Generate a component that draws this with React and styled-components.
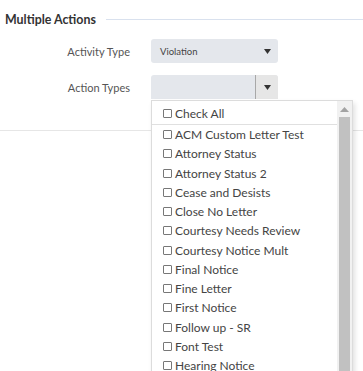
import React from "react";
import styled, { createGlobalStyle } from "styled-components";

const Global = createGlobalStyle`
  html, body { margin: 0; padding: 0; background: #fff; }
  body { font-family: "Lato", "Noto Sans", sans-serif; color: #444; }
`;

const Page = styled.div`
  height: 100vh;
  overflow: hidden;
`;

const Section = styled.div`
  border-bottom: 1px solid #e6e6e6;
  height: 131px;
  box-sizing: border-box;
  padding-top: 10px;
`;

const Header = styled.div`
  display: flex;
  align-items: center;
  gap: 10px;
  padding-left: 5px;
  height: 18px;
`;

const Title = styled.div`
  font-weight: 700;
  font-size: 12.4px;
  color: #333;
  white-space: nowrap;
`;

const Rule = styled.div`
  flex: 1;
  height: 1px;
  background: #d9e1ee;
`;

const Form = styled.div`
  display: flex;
  flex-direction: column;
  gap: 12px;
  margin-top: 11px;
`;

const Row = styled.div`
  display: grid;
  grid-template-columns: 130px 127px;
  column-gap: 21px;
  align-items: center;
  position: relative;
`;

const Label = styled.div`
  text-align: right;
  font-size: 11px;
  color: #555;
`;

const SelectBox = styled.div`
  height: 24px;
  background: #e4e7ec;
  border-radius: ${(p) => (p.$open ? "3px 3px 0 0" : "3px")};
  display: flex;
  align-items: center;
  font-size: 9.5px;
  color: #444;
  overflow: hidden;
`;

const SelectText = styled.div`
  flex: 1;
  padding-left: 9px;
`;

const ArrowCell = styled.div`
  width: 22px;
  align-self: stretch;
  display: flex;
  align-items: center;
  justify-content: center;
  background: ${(p) => (p.$split ? "#e6e6e6" : "transparent")};
  border-left: ${(p) => (p.$split ? "1px solid #a8a8a8" : "none")};
`;

const Arrow = () => (
  <svg width="7" height="5" viewBox="0 0 7 5">
    <path d="M0 0h7L3.5 5z" fill="#333" />
  </svg>
);

const Dropdown = styled.div`
  position: absolute;
  left: 151px;
  top: 25px;
  width: 202px;
  height: 300px;
  background: #fff;
  border: 1px solid #dcdcdc;
  box-sizing: border-box;
  box-shadow: 2px 3px 5px rgba(0, 0, 0, 0.12);
  display: flex;
  z-index: 5;
`;

const List = styled.div`
  flex: 1;
  display: flex;
  flex-direction: column;
`;

const CheckAll = styled.div`
  height: 22px;
  flex: none;
  border-bottom: 1px solid #e0e0e0;
  display: flex;
  align-items: center;
  padding-left: 11px;
  margin-top: 1px;
`;

const Item = styled.div`
  height: 19.25px;
  flex: none;
  display: flex;
  align-items: center;
  padding-left: 11px;
  font-size: 12px;
  color: #444;
  white-space: nowrap;
`;

const ItemText = styled.span`
  font-size: 12px;
  color: #444;
`;

const Box = styled.span`
  width: 7px;
  height: 7px;
  border: 1px solid #777;
  border-radius: 1px;
  margin-right: 3px;
  flex: none;
`;

const Scrollbar = styled.div`
  width: 15px;
  background: #f1f1f1;
  display: flex;
  flex-direction: column;
  align-items: center;
`;

const UpArrow = styled.div`
  height: 16px;
  display: flex;
  align-items: center;
  justify-content: center;
`;

const Thumb = styled.div`
  width: 11px;
  flex: 1;
  background: #c1c1c1;
`;

const items = [
  "ACM Custom Letter Test",
  "Attorney Status",
  "Attorney Status 2",
  "Cease and Desists",
  "Close No Letter",
  "Courtesy Needs Review",
  "Courtesy Notice Mult",
  "Final Notice",
  "Fine Letter",
  "First Notice",
  "Follow up - SR",
  "Font Test",
  "Hearing Notice",
];

export default function App() {
  return (
    <Page>
      <Global />
      <Section>
        <Header>
          <Title>Multiple Actions</Title>
          <Rule />
        </Header>
        <Form>
          <Row>
            <Label>Activity Type</Label>
            <SelectBox>
              <SelectText>Violation</SelectText>
              <ArrowCell>
                <Arrow />
              </ArrowCell>
            </SelectBox>
          </Row>
          <Row>
            <Label>Action Types</Label>
            <SelectBox $open>
              <SelectText />
              <ArrowCell $split>
                <Arrow />
              </ArrowCell>
            </SelectBox>
            <Dropdown>
              <List>
                <CheckAll>
                  <Box />
                  <ItemText>Check All</ItemText>
                </CheckAll>
                {items.map((t) => (
                  <Item key={t}>
                    <Box />
                    {t}
                  </Item>
                ))}
              </List>
              <Scrollbar>
                <UpArrow>
                  <svg width="9" height="5" viewBox="0 0 9 5">
                    <path d="M0 5h9L4.5 0z" fill="#a3a3a3" />
                  </svg>
                </UpArrow>
                <Thumb />
              </Scrollbar>
            </Dropdown>
          </Row>
        </Form>
      </Section>
    </Page>
  );
}
